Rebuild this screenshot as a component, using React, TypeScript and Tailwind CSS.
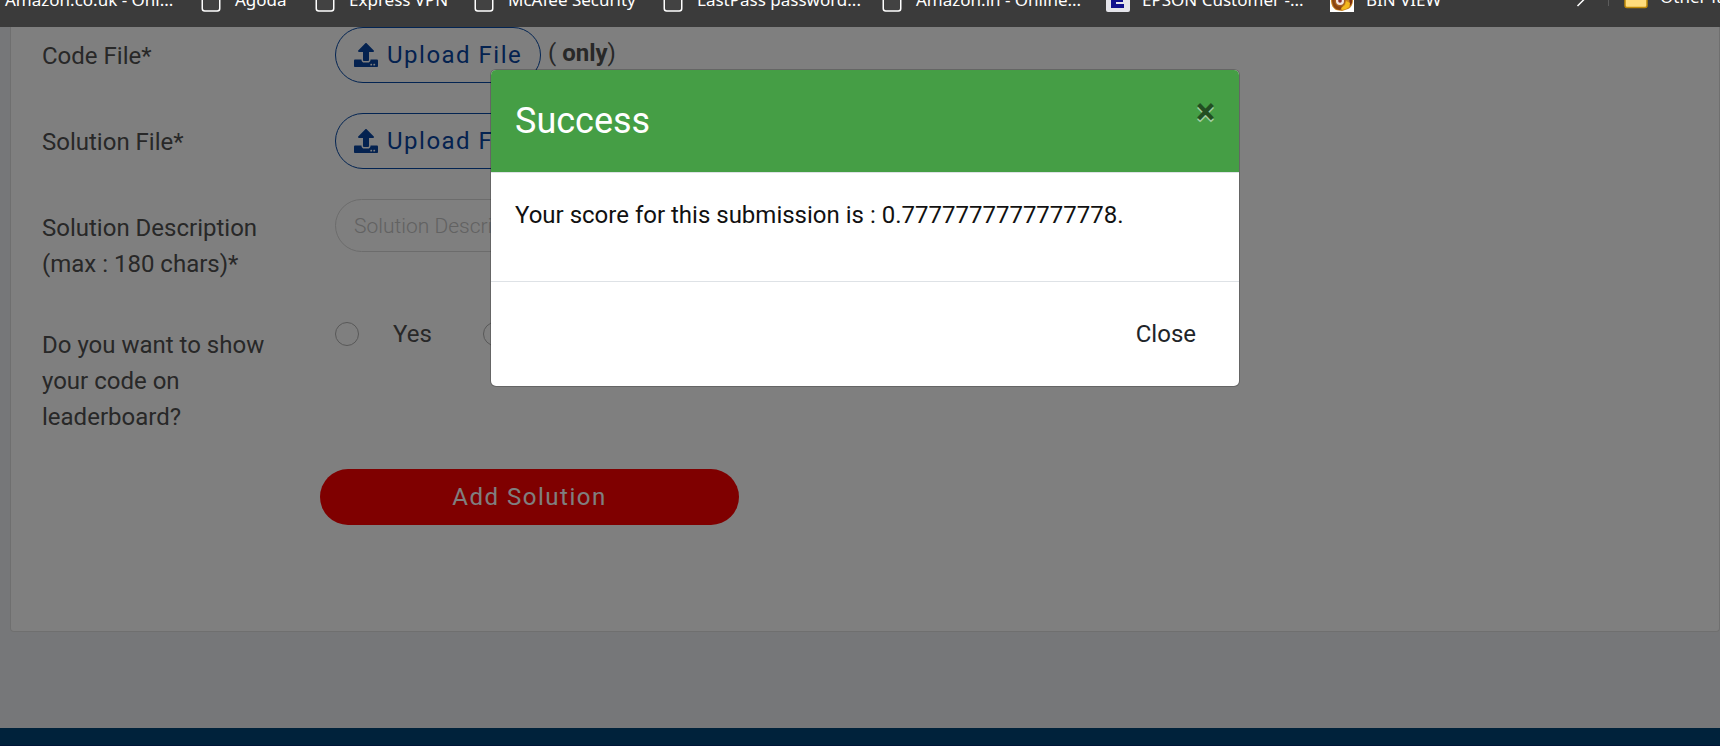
import { FaUpload } from 'react-icons/fa';
import type { ReactNode } from 'react';

function PageIcon() {
  return (
    <svg className="h-6 w-5 shrink-0" viewBox="0 0 20 24" fill="none" stroke="#fff" strokeWidth="1.5">
      <rect x="1.25" y="1" width="17.5" height="22" rx="2.5" fill="#424242" />
    </svg>
  );
}

function EpsonIcon() {
  return (
    <svg className="size-6 shrink-0" viewBox="0 0 24 24">
      <rect x="0" y="0" width="24" height="24" rx="2" fill="#e4e4ea" />
      <path d="M5 2h13v4h-8v4h7v4h-7v2h8v4H5z" fill="#10108c" />
    </svg>
  );
}

function BinIcon() {
  return (
    <svg className="size-6 shrink-0" viewBox="0 0 24 24">
      <rect width="24" height="24" fill="#fff" />
      <path d="M1 12C1 4 6 1 12 1s11 4 11 11c0 4-2 8-5 9l-6 2-6-1c-3-2-5-5-5-10z" fill="#c98420" />
      <path d="M2 11c0 7 3 11 8 11l4-3-6-2-3-6z" fill="#8a4514" />
      <circle cx="10" cy="13" r="5.5" fill="#a8601e" />
      <circle cx="10" cy="13" r="4" fill="#f3e6e0" />
      <circle cx="10" cy="13" r="1.8" fill="#8a3030" />
      <path d="M19 9l3 1v5l-2 3z" fill="#7a3010" />
      <path d="M11 20l4-3 1-4 4 2-1 4-3 2-4 1z" fill="#f2b81c" />
    </svg>
  );
}

function FolderIcon() {
  return (
    <svg className="size-6 shrink-0" viewBox="0 0 24 24">
      <path d="M1 3h9l3 3h10v14.500q0 2-2 2H3q-2 0-2-2z" fill="#ffdc7c" stroke="#c08a08" strokeWidth="1.500" />
    </svg>
  );
}

function Bookmark({ icon, children, className = '' }: { icon?: ReactNode; children: ReactNode; className?: string }) {
  return (
    <a href="#" className={`flex h-6 shrink-0 items-center whitespace-nowrap ${className}`}>
      {icon}
      <span>{children}</span>
    </a>
  );
}

function Row({ label, id, children }: { label: string; id: string; children: ReactNode }) {
  return (
    <div className="flex items-start pb-[30px]">
      <label htmlFor={id} className="mr-[57px] w-[236px] shrink-0 pt-[11px] pb-1 leading-9">
        {label}
      </label>
      {children}
    </div>
  );
}

function UploadButton({ id }: { id: string }) {
  return (
    <button
      id={id}
      type="button"
      className="flex h-14 w-[206px] items-center gap-[9px] rounded-full border border-[#0648a4] pl-[18px] tracking-[1.5px] whitespace-nowrap text-[#0844a0]"
    >
      <FaUpload className="size-6" />
      Upload File
    </button>
  );
}

function Radio({ id, label }: { id: string; label: string }) {
  return (
    <div className="flex items-center gap-[34px]">
      <input id={id} type="radio" name="show-code" className="size-6 appearance-none rounded-full border border-[#b0b0b0]" />
      <label htmlFor={id} className="leading-9">
        {label}
      </label>
    </div>
  );
}

function SuccessDialog() {
  return (
    <div className="absolute inset-0 flex items-start justify-center bg-black/50 pt-[42px] pl-[10px]">
      <div
        role="dialog"
        aria-labelledby="dialog-title"
        className="w-full max-w-[750px] overflow-hidden rounded-md border border-black/20 bg-white bg-clip-padding text-[#111]"
      >
        <header className="flex items-start justify-between border-b border-[#dee2e6] bg-[#459e45] p-6">
          <h2 id="dialog-title" className="text-4xl leading-[54px] font-normal text-white">
            Success
          </h2>
          <button
            type="button"
            aria-label="Dismiss"
            className="text-4xl leading-9 font-bold text-black opacity-50 [text-shadow:0_2px_0_#fff]"
          >
            ×
          </button>
        </header>
        <p className="px-6 pt-6 pb-12 leading-9">Your score for this submission is : 0.7777777777777778.</p>
        <footer className="flex justify-end border-t border-[#dee2e6] p-6">
          <button type="button" className="h-14 px-[19px] text-[#212529]">
            Close
          </button>
        </footer>
      </div>
    </div>
  );
}

export default function App() {
  return (
    <div className="flex min-h-screen flex-col overflow-x-hidden font-['Roboto',sans-serif] text-2xl text-[#505050]">
      <nav className="flex h-[27px] items-end overflow-hidden bg-[#3b3b3b] pb-[15px] pl-[5px] font-['Noto_Sans',sans-serif] text-[17px] leading-6 text-white">
        <Bookmark className="w-[196px]">Amazon.co.uk - Onl...</Bookmark>
        <Bookmark className="w-[114px] gap-[14px]" icon={<PageIcon />}>Agoda</Bookmark>
        <Bookmark className="w-[159px] gap-[14px]" icon={<PageIcon />}>Express VPN</Bookmark>
        <Bookmark className="w-[189px] gap-[14px]" icon={<PageIcon />}>McAfee Security</Bookmark>
        <Bookmark className="w-[219px] gap-[14px]" icon={<PageIcon />}>LastPass password...</Bookmark>
        <Bookmark className="w-[224px] gap-[14px]" icon={<PageIcon />}>Amazon.in - Online...</Bookmark>
        <Bookmark className="w-[224px] gap-3" icon={<EpsonIcon />}>EPSON Customer -...</Bookmark>
        <Bookmark className="gap-3" icon={<BinIcon />}>BIN VIEW</Bookmark>
        <div className="ml-auto flex w-[144px] shrink-0 items-center">
          <button type="button" aria-label="More bookmarks" className="w-8 shrink-0">
            <svg className="h-6 w-4" viewBox="0 0 16 24" fill="none" stroke="#fff" strokeWidth="1.500">
              <path d="M1.500-1L12.500 10L1.500 21" />
            </svg>
          </button>
          <span className="mr-[15px] mb-1.5 h-6 w-px shrink-0 bg-[#5c5c5c]" />
          <Bookmark className="gap-3" icon={<FolderIcon />}>Other favorites</Bookmark>
        </div>
      </nav>
      <div className="relative flex flex-1 flex-col">
        <main className="flex-1 bg-[#edeff2] pb-24">
          <form className="ml-[10px] rounded-b border border-t-0 border-[#dedede] bg-white pb-[106px] pl-[31px]">
            <Row label="Code File*" id="code">
              <UploadButton id="code" />
              <span className="mt-2 ml-[7px] leading-9">
                ( <b>only</b>)
              </span>
            </Row>
            <Row label="Solution File*" id="solution">
              <UploadButton id="solution" />
            </Row>
            <Row label="Solution Description (max : 180 chars)*" id="description">
              <input
                id="description"
                type="text"
                placeholder="Solution Description"
                className="h-[53px] w-[420px] rounded-full border border-[#d8d8d8] px-[18px] text-[21px] font-light placeholder:text-[#c4c4c4]"
              />
            </Row>
            <Row label="Do you want to show your code on leaderboard?" id="show-yes">
              <div className="flex gap-[51px]">
                <Radio id="show-yes" label="Yes" />
                <Radio id="show-no" label="No" />
              </div>
            </Row>
            <button type="submit" className="ml-[278px] h-14 w-[419px] rounded-full bg-[#ff0000] tracking-[1.5px] text-white">
              Add Solution
            </button>
          </form>
        </main>
        <footer className="h-[18px] border-b border-[#002c70] bg-[#004476]" />
        <SuccessDialog />
      </div>
    </div>
  );
}
